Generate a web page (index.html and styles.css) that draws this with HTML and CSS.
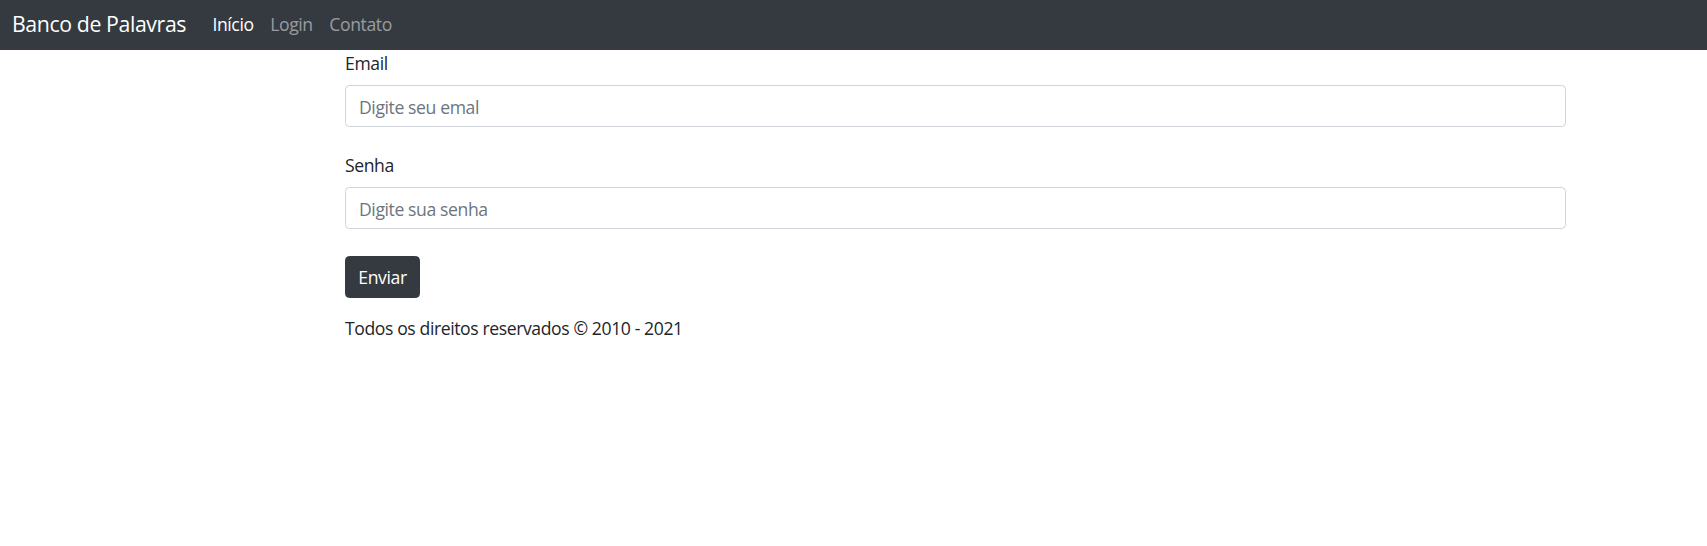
FILE: index.html
```html
<!DOCTYPE html>
<html lang="pt-BR">
<head>
<meta charset="utf-8">
<title>Banco de Palavras</title>
<link rel="stylesheet" href="styles.css">
</head>
<body>
<nav class="navbar">
  <a class="brand" href="#">Banco de Palavras</a>
  <ul class="nav-links">
    <li><a class="nav-link active" href="#">Início</a></li>
    <li><a class="nav-link" href="#">Login</a></li>
    <li><a class="nav-link" href="#">Contato</a></li>
  </ul>
</nav>
<main class="content">
  <form class="login-form">
    <div class="form-group">
      <label class="form-label" for="email">Email</label>
      <input class="form-control" type="email" id="email" placeholder="Digite seu emal">
    </div>
    <div class="form-group">
      <label class="form-label" for="senha">Senha</label>
      <input class="form-control" type="password" id="senha" placeholder="Digite sua senha">
    </div>
    <button class="btn-dark" type="submit">Enviar</button>
  </form>
  <footer class="footer">Todos os direitos reservados © 2010 - 2021</footer>
</main>
</body>
</html>
```

FILE: styles.css
```css
* { box-sizing: border-box; }
html, body { margin: 0; padding: 0; }
body {
  font-family: "Open Sans", "Noto Sans", sans-serif;
  font-size: 17.6px;
  line-height: 26.4px;
  color: #212529;
  background: #fff;
  letter-spacing: -0.4px;
}
.navbar {
  height: 50px;
  background: #343a40;
  display: flex;
  align-items: center;
  padding: 0 12px;
}
.brand {
  color: #fff;
  text-decoration: none;
  font-size: 21.3px;
  line-height: 30px;
  margin-right: 18px;
  margin-top: -2px;
}
.nav-links {
  list-style: none;
  margin: 0;
  padding: 0;
  display: flex;
}
.nav-link {
  display: block;
  padding: 0 8.3px;
  color: rgba(255, 255, 255, 0.5);
  text-decoration: none;
  margin-top: -2px;
}
.nav-link.active { color: #fff; }
.content {
  width: 1221px;
  margin-left: 345px;
}
.login-form { display: flex; flex-direction: column; align-items: flex-start; }
.form-group { width: 100%; margin-bottom: 25px; }
.form-group:last-of-type { margin-bottom: 27px; }
.form-label { display: block; height: 26px; margin-bottom: 9px; }
.form-control {
  display: block;
  width: 100%;
  height: 42px;
  padding: 1px 13px 0;
  border: 1px solid #ced4da;
  border-radius: 4.4px;
  font: inherit;
  letter-spacing: inherit;
  color: #495057;
  background: #fff;
}
.form-control::placeholder { color: #6c757d; }
.btn-dark {
  height: 42px;
  width: 75px;
  padding: 0;
  border: 1px solid #343a40;
  border-radius: 4.4px;
  background: #343a40;
  color: #fff;
  font: inherit;
  letter-spacing: inherit;
}
.footer { margin-top: 17px; }
```
